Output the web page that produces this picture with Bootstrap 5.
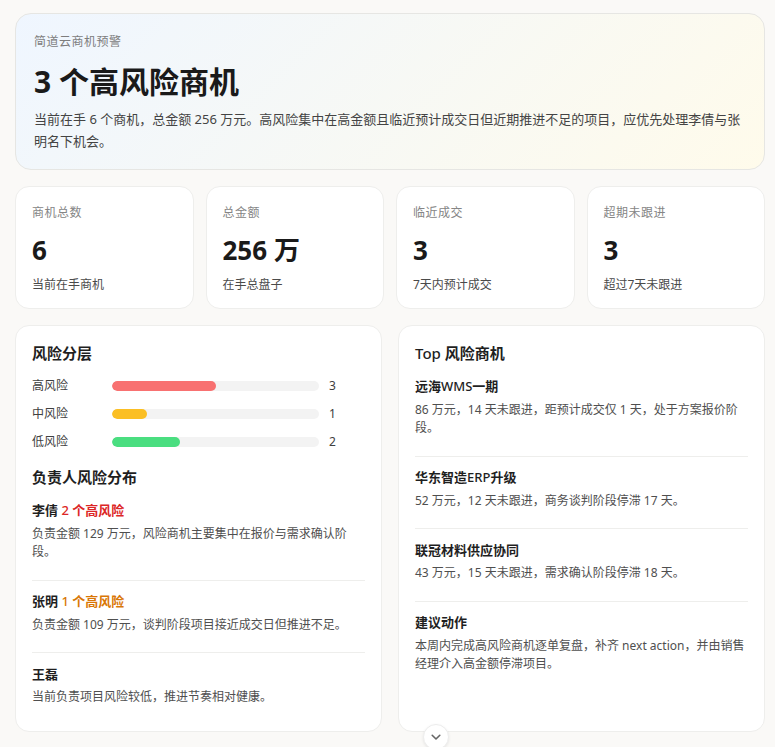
<!DOCTYPE html>
<html lang="zh-CN">
<head>
  <meta charset="UTF-8" />
  <meta name="viewport" content="width=device-width, initial-scale=1" />
  <title>简道云商机预警</title>
  <link href="https://cdn.jsdelivr.net/npm/bootstrap@5.3.3/dist/css/bootstrap.min.css" rel="stylesheet" />
  <style>
    html, body { height: 100%; overflow: hidden; }
    body {
      background: #faf9f7;
      color: #1f1f1f;
      font-family: "Noto Sans", "Noto Sans CJK SC", sans-serif;
      font-size: 12px;
      line-height: 18px;
    }
    .page-wrap { padding: 13px 10px 0 15px; }
    .hero-box {
      height: 157px;
      padding: 20px 18px;
      border: 1px solid #e6e6e3;
      border-radius: 16px;
      background: linear-gradient(135deg, #eff6ff 0%, #fffbeb 100%);
    }
    .hero-kicker { color: #7d7d7d; line-height: 16px; letter-spacing: .5px; }
    .hero-title { font-size: 30px; line-height: 40px; font-weight: 700; margin: 12px 0 6px; color: #1a1a1a; }
    .hero-text { font-size: 13px; line-height: 22px; color: #444; }
    .stat-row { display: grid; grid-template-columns: repeat(4, 1fr); gap: 12px; margin-top: 16px; }
    .stat-box { height: 123px; padding: 17px 16px; background: #fff; border: 1px solid #eeeeec; border-radius: 14px; }
    .stat-label { color: #858585; line-height: 18px; letter-spacing: .5px; }
    .stat-num { font-size: 26px; line-height: 34px; font-weight: 700; margin: 11px 0 9px; color: #1a1a1a; }
    .stat-sub { color: #4a4a4a; line-height: 18px; }
    .panel-row { display: grid; grid-template-columns: 1fr 1fr; gap: 16px; margin-top: 16px; }
    .panel-box { height: 407px; padding: 16px; background: #fff; border: 1px solid #eeeeec; border-radius: 14px; }
    .panel-title { font-size: 15px; line-height: 22px; font-weight: 600; margin: 0 0 8px; color: #1f1f1f; }
    .risk-line { display: flex; align-items: center; height: 28px; color: #404040; }
    .risk-name { width: 80px; }
    .risk-track { width: 207px; height: 10px; border-radius: 5px; background: #f3f3f3; overflow: hidden; }
    .risk-fill { height: 100%; border-radius: 5px; }
    .risk-count { margin-left: 10px; }
    .fill-high { background: #f87171; }
    .fill-mid { background: #fbbf24; }
    .fill-low { background: #4ade80; }
    .owner-title { margin: 10px 0 13px; }
    .entry-item { padding-bottom: 18px; margin-bottom: 11.5px; border-bottom: 1px solid #eeeeec; }
    .entry-item:last-child { border-bottom: 0; padding-bottom: 0; margin-bottom: 0; }
    .entry-name { font-size: 13px; line-height: 19.5px; font-weight: 600; color: #1f1f1f; margin-bottom: 4px; }
    .entry-text { color: #4f4f4f; line-height: 18.6px; }
    .tag-red { color: #dc2626; }
    .tag-orange { color: #d97706; }
    .latin-mid { font-weight: 500; }
    .top-list { margin-top: 13px; }
    .scroll-btn {
      position: fixed;
      left: 423px;
      top: 724px;
      width: 26px;
      height: 26px;
      padding: 0;
      border: 1px solid #ececec;
      border-radius: 50%;
      background: #fff;
      box-shadow: 0 1px 3px rgba(0,0,0,.08);
    }
    .scroll-btn svg { display: block; margin: 0 auto; }
  </style>
</head>
<body>

  <div class="page-wrap">
    <div class="hero-box">
      <div class="hero-kicker">简道云商机预警</div>
      <h1 class="hero-title">3 个高风险商机</h1>
      <div class="hero-text">当前在手 6 个商机，总金额 256 万元。高风险集中在高金额且临近预计成交日但近期推进不足的项目，应优先处理李倩与张明名下机会。</div>
    </div>

    <div class="stat-row">
      <div class="stat-box">
        <div class="stat-label">商机总数</div>
        <div class="stat-num">6</div>
        <div class="stat-sub">当前在手商机</div>
      </div>
      <div class="stat-box">
        <div class="stat-label">总金额</div>
        <div class="stat-num">256 万</div>
        <div class="stat-sub">在手总盘子</div>
      </div>
      <div class="stat-box">
        <div class="stat-label">临近成交</div>
        <div class="stat-num">3</div>
        <div class="stat-sub">7天内预计成交</div>
      </div>
      <div class="stat-box">
        <div class="stat-label">超期未跟进</div>
        <div class="stat-num">3</div>
        <div class="stat-sub">超过7天未跟进</div>
      </div>
    </div>

    <div class="panel-row">
      <div class="panel-box">
        <h2 class="panel-title">风险分层</h2>
        <div class="risk-line">
          <span class="risk-name">高风险</span>
          <div class="risk-track"><div class="risk-fill fill-high" style="width: 50%"></div></div>
          <span class="risk-count">3</span>
        </div>
        <div class="risk-line">
          <span class="risk-name">中风险</span>
          <div class="risk-track"><div class="risk-fill fill-mid" style="width: 17%"></div></div>
          <span class="risk-count">1</span>
        </div>
        <div class="risk-line">
          <span class="risk-name">低风险</span>
          <div class="risk-track"><div class="risk-fill fill-low" style="width: 33%"></div></div>
          <span class="risk-count">2</span>
        </div>
        <h2 class="panel-title owner-title">负责人风险分布</h2>
        <div class="entry-item">
          <div class="entry-name">李倩 <span class="tag-red"><span class="latin-mid">2</span> 个高风险</span></div>
          <div class="entry-text">负责金额 129 万元，风险商机主要集中在报价与需求确认阶段。</div>
        </div>
        <div class="entry-item">
          <div class="entry-name">张明 <span class="tag-orange"><span class="latin-mid">1</span> 个高风险</span></div>
          <div class="entry-text">负责金额 109 万元，谈判阶段项目接近成交日但推进不足。</div>
        </div>
        <div class="entry-item">
          <div class="entry-name">王磊</div>
          <div class="entry-text">当前负责项目风险较低，推进节奏相对健康。</div>
        </div>
      </div>

      <div class="panel-box">
        <h2 class="panel-title m-0"><span class="latin-mid">Top</span> 风险商机</h2>
        <div class="top-list">
          <div class="entry-item">
            <div class="entry-name">远海<span class="latin-mid">WMS</span>一期</div>
            <div class="entry-text">86 万元，14 天未跟进，距预计成交仅 1 天，处于方案报价阶段。</div>
          </div>
          <div class="entry-item">
            <div class="entry-name">华东智造<span class="latin-mid">ERP</span>升级</div>
            <div class="entry-text">52 万元，12 天未跟进，商务谈判阶段停滞 17 天。</div>
          </div>
          <div class="entry-item">
            <div class="entry-name">联冠材料供应协同</div>
            <div class="entry-text">43 万元，15 天未跟进，需求确认阶段停滞 18 天。</div>
          </div>
          <div class="entry-item">
            <div class="entry-name">建议动作</div>
            <div class="entry-text">本周内完成高风险商机逐单复盘，补齐 next action，并由销售经理介入高金额停滞项目。</div>
          </div>
        </div>
      </div>
    </div>
  </div>

  <button type="button" class="scroll-btn" aria-label="向下滚动">
    <svg width="10" height="10" viewBox="0 0 10 10" fill="none" stroke="#666" stroke-width="1.6" stroke-linecap="round" stroke-linejoin="round"><path d="M1.2 3.3 5 7l3.8-3.7"/></svg>
  </button>

  <script src="https://cdn.jsdelivr.net/npm/bootstrap@5.3.3/dist/js/bootstrap.bundle.min.js"></script>
</body>
</html>
